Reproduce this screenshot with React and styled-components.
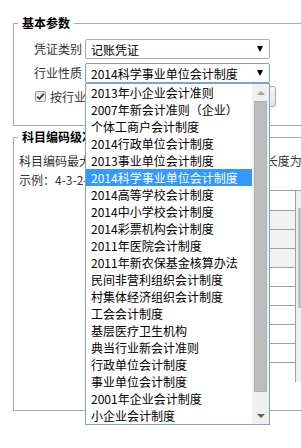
import React from 'react';
import styled, { createGlobalStyle } from 'styled-components';

const GlobalStyle = createGlobalStyle`
  html, body {
    margin: 0;
    padding: 0;
    background: #fff;
  }
  body {
    font-family: "Noto Sans CJK SC", "Microsoft YaHei", sans-serif;
    font-size: 12px;
    color: #333;
  }
`;

const Page = styled.div`
  box-sizing: border-box;
  width: 301px;
  height: 448px;
  overflow: hidden;
  padding: 15px 0 0 13px;
  display: flex;
  flex-direction: column;
  align-items: flex-start;
  gap: 3px;
`;

const Fieldset = styled.fieldset`
  margin: 0;
  min-width: 0;
  width: 317px;
  box-sizing: border-box;
  padding: 0 0 ${(p) => p.$pb}px 4px;
  border: 1px solid #a9a9a9;
  flex-shrink: 0;
`;

const Legend = styled.legend`
  padding: 0 4px;
  font-weight: bold;
  font-size: 12px;
  line-height: 16px;
  color: #000;
`;

const FormRow = styled.div`
  display: flex;
  align-items: center;
  height: 20px;
  margin: ${(p) => p.$mt}px 0 0 16px;
`;

const Label = styled.span`
  width: 48px;
  margin-right: 3px;
  line-height: 20px;
  white-space: nowrap;
`;

const SelectWrap = styled.div`
  position: relative;
  width: 185px;
`;

const SelectBox = styled.div`
  box-sizing: border-box;
  height: 20px;
  border: 1px solid ${(p) => (p.$focus ? '#7da2ce' : '#a9a9a9')};
  border-radius: 2px;
  padding: 0 6px 0 5px;
  display: flex;
  align-items: center;
  justify-content: space-between;
  color: #000;
  white-space: nowrap;
  background: #fff;
`;

const Caret = styled.span`
  width: 0;
  height: 0;
  border-left: 3px solid transparent;
  border-right: 3px solid transparent;
  border-top: 6px solid #000;
`;

const DropList = styled.div`
  position: absolute;
  top: 100%;
  left: 0;
  width: 185px;
  box-sizing: border-box;
  border: 1px solid #7da2ce;
  background: #fff;
  display: flex;
  z-index: 5;
`;

const Options = styled.div`
  flex: 1;
  overflow: hidden;
`;

const Option = styled.div`
  height: 17px;
  line-height: 17px;
  padding-left: 5px;
  white-space: nowrap;
  color: ${(p) => (p.$active ? '#fff' : '#000')};
  background: ${(p) => (p.$active ? '#3399ff' : 'transparent')};
`;

const ScrollTrack = styled.div`
  width: 17px;
  background: #f0f0f0;
  display: flex;
  flex-direction: column;
  align-items: center;
`;

const ScrollBtn = styled.div`
  height: 17px;
  width: 17px;
  display: flex;
  align-items: center;
  justify-content: center;
  flex-shrink: 0;
`;

const Tri = styled.span`
  width: 0;
  height: 0;
  border-left: 4px solid transparent;
  border-right: 4px solid transparent;
  ${(p) =>
    p.$up
      ? 'border-bottom: 4px solid #a3a3a3;'
      : 'border-top: 4px solid #606060;'}
`;

const Thumb = styled.div`
  width: 13px;
  box-sizing: border-box;
  background: #bdbdbd;
  border: 1px solid #b0b0b0;
  flex-shrink: 0;
`;

const Spacer = styled.div`
  flex: 1;
`;

const CheckRow = styled.div`
  display: flex;
  align-items: center;
  height: 21px;
  margin: 3px 0 0 17px;
`;

const CheckBox = styled.span`
  box-sizing: border-box;
  width: 11px;
  height: 11px;
  border: 1px solid #9a9a9a;
  border-radius: 2px;
  background: linear-gradient(#e4e4e4, #f6f6f6);
  display: flex;
  align-items: center;
  justify-content: center;
  margin-right: 4px;
`;

const CheckText = styled.span`
  white-space: nowrap;
  width: 132px;
`;

const SmallButton = styled.button`
  box-sizing: border-box;
  margin-left: 24px;
  width: 70px;
  height: 21px;
  border: 1px solid #a9a9a9;
  border-radius: 3px;
  background: linear-gradient(#f6f6f6, #e6e6e6);
  font-family: inherit;
  font-size: 12px;
  color: #000;
  padding: 0;
`;

const Para = styled.div`
  line-height: 19px;
  white-space: nowrap;
  margin-left: 1px;
`;

const Grid = styled.div`
  margin: 1px 0 0 96px;
  height: 192px;
  display: flex;
  border-top: 1px solid #a0a0a0;
  box-sizing: border-box;
`;

const GridBody = styled.div`
  width: 182px;
  box-sizing: border-box;
  border-right: 1px solid #a0a0a0;
  display: flex;
  flex-direction: column;
`;

const GridRow = styled.div`
  height: ${(p) => p.$h || 19}px;
  box-sizing: border-box;
  border-bottom: 1px solid #a0a0a0;
  background: ${(p) => (p.$shade ? '#f2f2f2' : '#fff')};
  flex-shrink: 0;
`;

const GridScroll = styled.div`
  width: 17px;
  background: #f0f0f0;
  display: flex;
  flex-direction: column;
  align-items: center;
  padding-top: 17px;
`;

const GridThumb = styled.div`
  width: 13px;
  height: 100px;
  background: #c1c1c1;
`;

const industries = [
  '2013年小企业会计准则',
  '2007年新会计准则（企业）',
  '个体工商户会计制度',
  '2014行政单位会计制度',
  '2013事业单位会计制度',
  '2014科学事业单位会计制度',
  '2014高等学校会计制度',
  '2014中小学校会计制度',
  '2014彩票机构会计制度',
  '2011年医院会计制度',
  '2011年新农保基金核算办法',
  '民间非营利组织会计制度',
  '村集体经济组织会计制度',
  '工会会计制度',
  '基层医疗卫生机构',
  '典当行业新会计准则',
  '行政单位会计制度',
  '事业单位会计制度',
  '2001年企业会计制度',
  '小企业会计制度',
];

const selected = '2014科学事业单位会计制度';

export default function App() {
  return (
    <>
      <GlobalStyle />
      <Page>
        <Fieldset $pb={18}>
          <Legend>基本参数</Legend>
          <FormRow $mt={8}>
            <Label>凭证类别</Label>
            <SelectWrap>
              <SelectBox>
                <span>记账凭证</span>
                <Caret />
              </SelectBox>
            </SelectWrap>
          </FormRow>
          <FormRow $mt={4}>
            <Label>行业性质</Label>
            <SelectWrap>
              <SelectBox $focus>
                <span>{selected}</span>
                <Caret />
              </SelectBox>
              <DropList>
                <Options>
                  {industries.map((name) => (
                    <Option key={name} $active={name === selected}>
                      {name}
                    </Option>
                  ))}
                </Options>
                <ScrollTrack>
                  <ScrollBtn>
                    <Tri $up />
                  </ScrollBtn>
                  <Thumb style={{ height: 291 }} />
                  <Spacer />
                  <ScrollBtn>
                    <Tri />
                  </ScrollBtn>
                </ScrollTrack>
              </DropList>
            </SelectWrap>
          </FormRow>
          <CheckRow>
            <CheckBox>
              <svg width="9" height="9" viewBox="0 0 9 9">
                <path d="M1.2 4.6 L3.4 6.8 L7.8 1.8" fill="none" stroke="#3a3a3a" strokeWidth="1.8" />
              </svg>
            </CheckBox>
            <CheckText>按行业性质预置会计科目</CheckText>
            <SmallButton>预置</SmallButton>
          </CheckRow>
        </Fieldset>

        <Fieldset $pb={28}>
          <Legend>科目编码级次</Legend>
          <Para style={{ marginTop: 6 }}>科目编码最大级次为6级，各级科目编码的最大长度为4位</Para>
          <Para>示例：4-3-2-2-2-2</Para>
          <Grid>
            <GridBody>
              <GridRow $h={20} />
              <GridRow $shade />
              <GridRow $shade />
              <GridRow $shade />
              <GridRow />
              <GridRow />
              <GridRow />
              <GridRow />
              <GridRow />
            </GridBody>
            <GridScroll>
              <GridThumb />
            </GridScroll>
          </Grid>
        </Fieldset>
      </Page>
    </>
  );
}
